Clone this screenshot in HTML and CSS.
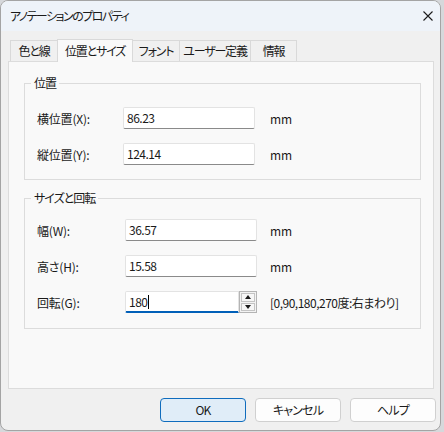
FILE: index.html
```html
<!DOCTYPE html>
<html lang="ja">
<head>
<meta charset="utf-8">
<title>アノテーションのプロパティ</title>
<link rel="stylesheet" href="styles.css">
</head>
<body>
<div class="window">
  <div class="titlebar">
    <span class="title">アノテーションのプロパティ</span>
    <svg class="close" width="10" height="10" viewBox="0 0 10 10"><path d="M0.5 0.5 L9.5 9.5 M9.5 0.5 L0.5 9.5" stroke="#1b1b1b" stroke-width="1.1" fill="none"/></svg>
  </div>
  <div class="content">
    <div class="tabs">
      <div class="tab t1">色と線</div>
      <div class="tab t2 active">位置とサイズ</div>
      <div class="tab t3">フォント</div>
      <div class="tab t4">ユーザー定義</div>
      <div class="tab t5">情報</div>
    </div>
    <div class="panel">
      <fieldset class="group g1">
        <legend>位置</legend>
        <div class="row">
          <span class="label">横位置(X):</span>
          <div class="field">86.23</div>
          <span class="unit">mm</span>
        </div>
        <div class="row">
          <span class="label">縦位置(Y):</span>
          <div class="field">124.14</div>
          <span class="unit">mm</span>
        </div>
      </fieldset>
      <fieldset class="group g2">
        <legend>サイズと回転</legend>
        <div class="row">
          <span class="label">幅(W):</span>
          <div class="field">36.57</div>
          <span class="unit">mm</span>
        </div>
        <div class="row">
          <span class="label">高さ(H):</span>
          <div class="field">15.58</div>
          <span class="unit">mm</span>
        </div>
        <div class="row">
          <span class="label">回転(G):</span>
          <div class="spin">
            <div class="field focused">180<span class="caret"></span></div>
            <div class="spin-btns">
              <div class="sbtn"><span class="tri up"></span></div>
              <div class="sbtn"><span class="tri down"></span></div>
            </div>
          </div>
          <span class="unit hint">[0,90,180,270度:右まわり]</span>
        </div>
      </fieldset>
    </div>
    <div class="buttons">
      <button class="btn default">OK</button>
      <button class="btn">キャンセル</button>
      <button class="btn">ヘルプ</button>
    </div>
  </div>
</div>
</body>
</html>
```

FILE: styles.css
```css
* { box-sizing: border-box; }
html, body {
  margin: 0;
  padding: 0;
}
body {
  width: 444px;
  height: 432px;
  background: #d6d8db;
  font-family: "Noto Sans CJK JP", "Noto Sans", sans-serif;
  font-size: 12px;
  font-feature-settings: "palt";
  color: #1a1a1a;
  overflow: hidden;
}
.window {
  width: 441px;
  height: 431px;
  border: 1px solid #a4a4a4;
  border-radius: 8px;
  overflow: hidden;
  background: #f0f0f0;
  display: flex;
  flex-direction: column;
}
.titlebar {
  height: 30px;
  flex: none;
  background: #eef3f9;
  display: flex;
  align-items: center;
  justify-content: space-between;
  padding: 0 7px 0 9px;
}
.title {
  font-size: 12px;
  line-height: 16px;
  letter-spacing: -1.5px;
  color: #1a1a1a;
}
.close { display: block; }
.content {
  padding: 8px 0 0 7px;
  display: flex;
  flex-direction: column;
}
.tabs {
  display: flex;
  align-items: flex-end;
  height: 23px;
  margin-left: 2px;
  margin-bottom: -1px;
  position: relative;
  z-index: 1;
}
.tab {
  height: 21px;
  margin-bottom: 1px;
  margin-right: -1px;
  border: 1px solid #d9d9d9;
  border-bottom: none;
  background: #f0f0f0;
  display: flex;
  align-items: center;
  justify-content: center;
  line-height: 14px;
  letter-spacing: -1.2px;
  white-space: nowrap;
}
.tab.active {
  height: 23px;
  margin-bottom: 0;
  padding-bottom: 1px;
  background: #f9f9f9;
  position: relative;
  z-index: 2;
}
.t1 { width: 48px; }
.t2 { width: 76px; }
.t3 { width: 48px; }
.t4 { width: 72px; }
.t5 { width: 47px; }
.panel {
  width: 426px;
  height: 328px;
  border: 1px solid #dcdcdc;
  background: #f9f9f9;
  padding: 13px 12px 0 15px;
}
.group {
  margin: 0;
  border: 1px solid #dcdcdc;
  min-width: 0;
  display: flex;
  flex-direction: column;
  gap: 14px;
}
.group legend {
  padding: 0 3px;
  margin-left: -6px;
  line-height: 16px;
  font-size: 12px;
  letter-spacing: -1px;
}
.g1 { padding: 16px 12px 14px 12px; }
.g2 { padding: 13px 12px 15px 12px; margin-top: 10px; }
.row {
  display: flex;
  align-items: center;
  height: 22px;
}
.label {
  width: 86px;
  flex: none;
  white-space: nowrap;
  letter-spacing: -0.2px;
}
.g2 .label { width: 88px; }
.field {
  width: 132px;
  height: 22px;
  background: #ffffff;
  border: 1px solid #e3e3e3;
  border-bottom-color: #8a8a8a;
  border-radius: 2px;
  padding-left: 3px;
  display: flex;
  align-items: center;
  line-height: 14px;
  letter-spacing: -0.5px;
  flex: none;
}
.unit {
  margin-left: 15px;
  white-space: nowrap;
}
.g2 .unit { margin-left: 13px; }
.unit.hint { letter-spacing: -0.5px; }
.spin {
  width: 132px;
  height: 22px;
  display: flex;
  flex: none;
}
.field.focused {
  width: 114px;
  border-bottom: 2px solid #005fb8;
  border-radius: 2px 0 0 2px;
}
.caret {
  display: inline-block;
  width: 1px;
  height: 14px;
  background: #000;
  margin-left: 1px;
}
.spin-btns {
  width: 18px;
  height: 22px;
  border: 1px solid #b4b4b4;
  background: #f3f3f3;
  display: flex;
  flex-direction: column;
  gap: 1px;
  padding: 1px;
}
.sbtn {
  flex: 1;
  border: 1px solid #c4c4c4;
  background: #f7f7f7;
  display: flex;
  align-items: center;
  justify-content: center;
}
.tri {
  width: 0;
  height: 0;
  border-left: 3px solid transparent;
  border-right: 3px solid transparent;
}
.tri.up { border-bottom: 4px solid #1a1a1a; }
.tri.down { border-top: 4px solid #1a1a1a; }
.buttons {
  display: flex;
  justify-content: flex-end;
  gap: 9px;
  margin-top: 9px;
  padding-right: 4px;
}
.btn {
  width: 86px;
  height: 24px;
  font-family: inherit;
  font-size: 12px;
  font-feature-settings: "palt";
  letter-spacing: -0.8px;
  color: #1a1a1a;
  background: #fdfdfd;
  border: 1px solid #d0d0d0;
  border-radius: 4px;
  padding: 0;
  line-height: 14px;
}
.btn.default {
  background: #e0edf8;
  border-color: #0f6cbd;
}
```
